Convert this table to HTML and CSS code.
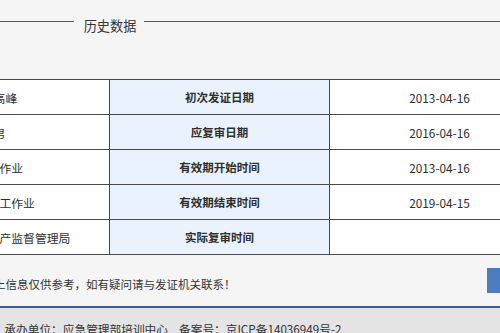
FILE: index.html
```html
<!DOCTYPE html>
<html lang="zh-CN">
<head>
<meta charset="utf-8">
<title>历史数据</title>
<link rel="stylesheet" href="styles.css">
</head>
<body>
<div class="page">
  <div class="title"><span class="title-text">历史数据</span></div>
  <table class="data">
    <colgroup><col class="c"><col class="c"><col class="c"><col class="c"></colgroup>
    <tr><td class="label">姓名</td><td>王高峰</td><td class="label">初次发证日期</td><td>2013-04-16</td></tr>
    <tr><td class="label">性别</td><td>男</td><td class="label">应复审日期</td><td>2016-04-16</td></tr>
    <tr><td class="label">作业类别</td><td>电工作业</td><td class="label">有效期开始时间</td><td>2013-04-16</td></tr>
    <tr><td class="label">准操项目</td><td>低压电工作业</td><td class="label">有效期结束时间</td><td>2019-04-15</td></tr>
    <tr><td class="label">发证机关</td><td>北京市安全生产监督管理局</td><td class="label">实际复审时间</td><td></td></tr>
  </table>
  <div class="notice-row">
    <p class="notice">以上信息仅供参考，如有疑问请与发证机关联系！</p>
    <button class="print-btn" type="button">打印</button>
  </div>
</div>
<footer class="footer">
  <div class="footer-inner">
    <span>主办单位：应急管理部</span>
    <span>承办单位：应急管理部培训中心</span>
    <span>备案号：京ICP备14036949号-2</span>
  </div>
</footer>
</body>
</html>
```

FILE: styles.css
```css
html, body {
  margin: 0;
  padding: 0;
}
body {
  background: #f5f5f5;
  font-family: "Noto Sans CJK SC", "Noto Sans", sans-serif;
  color: #333;
  overflow: hidden;
  width: 500px;
  height: 333px;
}
.page {
  width: 880px;
  margin-left: -331px;
}
.title {
  display: flex;
  align-items: flex-start;
  padding-top: 16px;
  height: 20px;
  line-height: 20px;
  font-size: 13.2px;
  color: #333;
}
.title::before,
.title::after {
  content: "";
  flex: 1;
  border-top: 1px solid #555;
  margin-top: 5px;
}
.title-text {
  margin: 0 8px 0 10px;
}
.data {
  margin-top: 43px;
  width: 880px;
  table-layout: fixed;
  border-collapse: collapse;
  font-size: 11.8px;
}
.data col.c {
  width: 220px;
}
.data td {
  border: 1px solid #4a4a4a;
  height: 34px;
  padding: 0;
  text-align: center;
  background: #fff;
  color: #2e2e2e;
}
.data td.label {
  background: #eaf3fd;
  font-weight: bold;
  font-size: 11.5px;
}
.notice-row {
  display: grid;
  grid-template-columns: 1fr auto 1fr;
  align-items: start;
  margin-top: 13px;
}
.notice {
  grid-column: 2;
  margin: 6px 0 0;
  font-size: 11.5px;
  line-height: 20px;
  color: #333;
}
.print-btn {
  grid-column: 3;
  justify-self: end;
  width: 62px;
  height: 25px;
  border: 0;
  padding: 0;
  background: #4a7dc1;
  color: #fff;
  font-family: inherit;
  font-size: 12px;
}
.footer {
  margin-top: 12px;
  border-top: 2px solid #3d5c9c;
  background: #e4e4e4;
  padding-top: 12px;
  height: 14px;
}
.footer-inner {
  width: 880px;
  margin-left: -331px;
  display: flex;
  justify-content: center;
  gap: 11px;
  font-size: 11.7px;
  line-height: 18px;
  color: #333;
}
```
